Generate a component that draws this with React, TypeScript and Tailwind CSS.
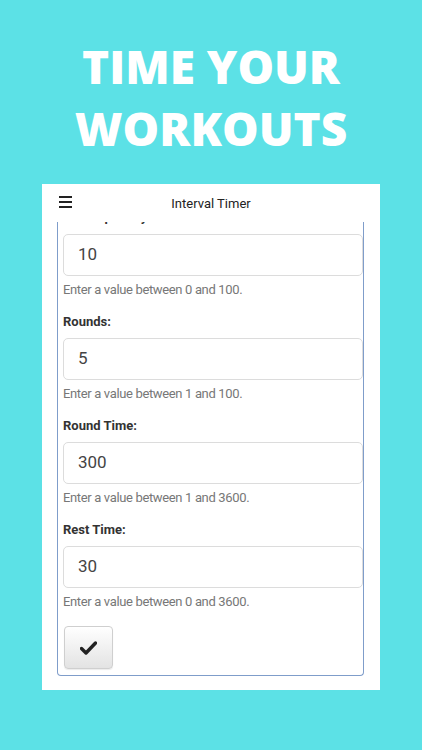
import React from "react";

type Field = { label: string; value: string; hint: string };

const fields: Field[] = [
  { label: "Warmup Delay:", value: "10", hint: "Enter a value between 0 and 100." },
  { label: "Rounds:", value: "5", hint: "Enter a value between 1 and 100." },
  { label: "Round Time:", value: "300", hint: "Enter a value between 1 and 3600." },
  { label: "Rest Time:", value: "30", hint: "Enter a value between 0 and 3600." },
];

function FieldRow({ f, first }: { f: Field; first: boolean }) {
  return (
    <div className={first ? "-mt-[14px]" : "mt-[14px]"}>
      <div className="h-[18px] text-[13px] leading-[18px] font-bold text-[#333]">{f.label}</div>
      <div
        className={`${first ? "mt-[8px]" : "mt-[7px]"} h-[42px] rounded-[5px] border border-[#dcdcdc] bg-white pl-[14px] flex items-center text-[17px] text-[#444]`}
      >
        {f.value}
      </div>
      <div className="mt-[5px] h-[18px] text-[13px] leading-[18px] tracking-[-0.35px] text-[#777]">{f.hint}</div>
    </div>
  );
}

export default function App() {
  return (
    <div
      className="w-[422px] h-[750px] bg-[#5ce1e6] flex flex-col items-center overflow-hidden"
      style={{ fontFamily: "Roboto, 'Liberation Sans', sans-serif" }}
    >
      <h1
        className="mt-[35px] text-white text-center text-[46px] leading-[62px] font-extrabold"
        style={{ fontFamily: "'Open Sans', 'Liberation Sans', sans-serif" }}
      >
        TIME YOUR
        <br />
        WORKOUTS
      </h1>

      <div className="mt-[25px] w-[338px] h-[506px] bg-white flex flex-col">
        <header className="relative z-10 h-[38px] shrink-0 bg-white flex items-center justify-center">
          <div className="absolute left-[17px] top-[12px] flex flex-col gap-[3px]">
            <span className="block w-[13px] h-[2px] bg-[#222]" />
            <span className="block w-[13px] h-[2px] bg-[#222]" />
            <span className="block w-[13px] h-[2px] bg-[#222]" />
          </div>
          <span className="text-[13px] text-[#222] mt-[1px]">Interval Timer</span>
        </header>

        <div className="flex-1 overflow-hidden pl-[15px] pr-[16px]">
          <div className="border-x border-b border-[#7f9dca] rounded-b-[4px] pl-[5px] pr-0 pb-[6px]">
            {fields.map((f, i) => (
              <FieldRow key={f.label} f={f} first={i === 0} />
            ))}
            <button className="mt-[15px] ml-[1px] w-[49px] h-[43px] rounded-[4px] border border-[#cfcfcf] bg-gradient-to-b from-[#ffffff] to-[#e3e3e3] flex items-center justify-center shadow-[0_1px_1px_rgba(0,0,0,0.08)]">
              <svg width="17" height="14" viewBox="0 0 17 14">
                <path d="M1.5 7.5 L6 12 L15.5 2" fill="none" stroke="#222" strokeWidth="3.4" strokeLinecap="round" strokeLinejoin="round" />
              </svg>
            </button>
          </div>
        </div>
      </div>
    </div>
  );
}
